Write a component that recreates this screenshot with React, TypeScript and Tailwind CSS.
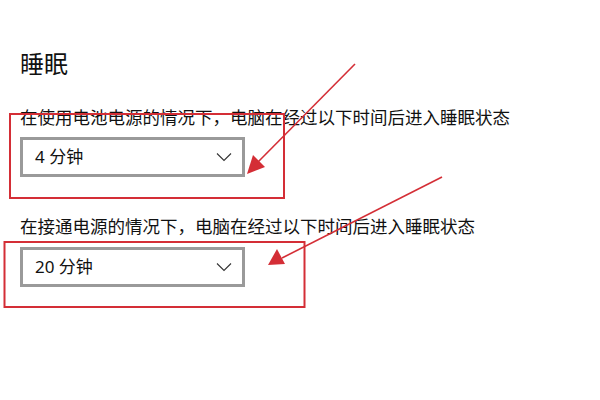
import React from "react";

const font = { fontFamily: '"Noto Sans", "Noto Sans CJK SC", sans-serif' };

function Chevron() {
  return (
    <svg width="16" height="10" viewBox="0 0 16 10" className="shrink-0">
      <path d="M1 1.5 L8 8.5 L15 1.5" fill="none" stroke="#333" strokeWidth="1.1" />
    </svg>
  );
}

function Select({ value }: { value: string }) {
  return (
    <div className="w-[225px] h-[40px] border-[3px] border-[#9a9a9a] bg-white flex items-center justify-between pl-[12px] pr-[10px]">
      <span className="text-[17px] text-[#111]">{value}</span>
      <Chevron />
    </div>
  );
}

export default function App() {
  return (
    <div className="relative w-[600px] h-[400px] bg-white overflow-hidden" style={font}>
      <div className="flex flex-col pl-[20px] pt-[48px]">
        <h1 className="text-[24px] leading-[32px] font-normal text-[#111]">睡眠</h1>
        <div className="mt-[25px] text-[17.5px] leading-[24px] text-[#111] whitespace-nowrap">
          在使用电池电源的情况下，电脑在经过以下时间后进入睡眠状态
        </div>
        <div className="mt-[8px]">
          <Select value="4 分钟" />
        </div>
        <div className="mt-[37px] text-[17.5px] leading-[24px] text-[#111] whitespace-nowrap">
          在接通电源的情况下，电脑在经过以下时间后进入睡眠状态
        </div>
        <div className="mt-[9px]">
          <Select value="20 分钟" />
        </div>
      </div>
      <svg className="absolute inset-0 pointer-events-none" width="600" height="400" viewBox="0 0 600 400">
        <rect x="10" y="114" width="274" height="84" fill="none" stroke="#d42e36" strokeWidth="2" />
        <rect x="4.5" y="242" width="300" height="65" fill="none" stroke="#d42e36" strokeWidth="2" />
        <line x1="355" y1="64" x2="258" y2="162" stroke="#d42e36" strokeWidth="1.6" />
        <polygon points="247,174 253,155 265,167" fill="#d42e36" />
        <line x1="442" y1="177" x2="282" y2="258" stroke="#d42e36" strokeWidth="1.6" />
        <polygon points="268,265 277,249 285,264" fill="#d42e36" />
      </svg>
    </div>
  );
}
